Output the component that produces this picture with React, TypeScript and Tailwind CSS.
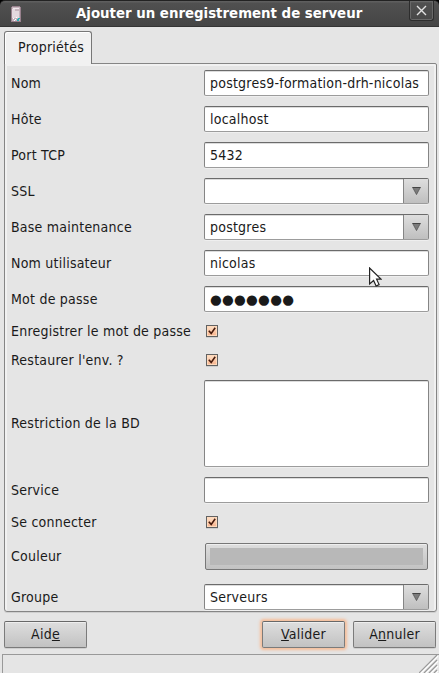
import type { ReactNode } from 'react';

function Row({ label, h, raised = false, children }: { label: string; h: string; raised?: boolean; children: ReactNode }) {
  return (
    <div className={`flex shrink-0 items-center ${h}`}>
      <span className={`w-[193px] shrink-0 whitespace-nowrap ${raised ? 'pb-[2px]' : ''}`}>{label}</span>
      {children}
    </div>
  );
}

const field =
  'rounded-[2px] border border-t-[#6b6b6b] border-l-[#858585] border-r-[#858585] border-b-[#9c9c9c] bg-white shadow-[0_1px_0_#efefef,inset_0_1px_0_#dcdcdc]';

function Field({ value = '', tall = false }: { value?: ReactNode; tall?: boolean }) {
  return (
    <div className={`${field} flex w-[225px] items-center whitespace-nowrap pl-[5px] ${tall ? 'h-[87px]' : 'h-[26px]'}`}>
      {value}
    </div>
  );
}

function Combo({ value = '' }: { value?: string }) {
  return (
    <div className={`${field} flex h-[26px] w-[225px] items-stretch`}>
      <div className="flex flex-1 items-center pl-[5px]">{value}</div>
      <div className="flex w-[25px] items-center justify-center border-l border-[#858585] bg-linear-to-b from-[#dedede] to-[#bfbfbf]">
        <svg width="9" height="8" viewBox="0 0 9 8">
          <path d="M0.7 0.5h7.6L4.5 7.6z" fill="#7b7b7b" stroke="#555" strokeWidth=".8" />
          <path d="M0.5 0.5h8" stroke="#444" />
        </svg>
      </div>
    </div>
  );
}

function Check() {
  return (
    <div className="ml-[2px] flex h-3 w-3 items-center justify-center border border-[#626262] bg-linear-to-b from-[#ffe2c8] to-[#f8b38d] shadow-[0_1px_0_#cfcfcf,inset_0_0_0_1px_#ffd9bb]">
      <svg width="10" height="10" viewBox="0 0 10 10" className="shrink-0">
        <path d="M1.8 4.8L4.2 7.4L8.2 1.8" fill="none" stroke="#451a0c" strokeWidth="1.6" />
      </svg>
    </div>
  );
}

const button =
  'flex h-[27px] w-[83px] items-center justify-center rounded-[2px] border border-[#7b7b7b] border-t-[#686868] bg-linear-to-b from-[#dedede] to-[#c2c2c2] pb-[2px]';

export default function App() {
  return (
    <div className="relative flex h-[673px] w-[439px] flex-col overflow-hidden bg-[#e5e5e5] font-['DejaVu_Sans_Condensed','DejaVu_Sans',sans-serif] text-[14px] leading-4 tracking-[0.23px] text-[#1a1a1a] [font-stretch:condensed]">
      <header className="flex h-[27px] shrink-0 bg-black">
        <div className="flex w-full items-start rounded-t-[5px] border-t border-b border-t-[#222] border-b-[#343434] bg-linear-to-b from-[#626262] via-[#505050] via-10% to-[#454545]">
          <svg width="11" height="17" viewBox="0 0 11 17" className="mt-[5px] ml-[11px] shrink-0" shapeRendering="crispEdges">
            <path d="M0 1h1V0h8v1h1v15H0z" fill="#98818d" />
            <path d="M1 1h8v14H1z" fill="#c6b4bd" />
            <path d="M1 3h3v9H1zM4 5h4v7H4z" fill="#e4d9df" />
            <path d="M2 2h6v1H2z" fill="#f0e6eb" />
            <path d="M2 12h1v1H2zm2 1h1v1H4zm-1 1h1v1H3zm2-3h1v1H5z" fill="#fff" />
            <path d="M7 12h2v1h-1v2H6v-2h1z" fill="#29afb4" />
          </svg>
          <h1 className="mt-[5px] ml-[54px] w-[288px] shrink-0 font-['DejaVu_Sans',sans-serif] whitespace-nowrap text-[13.35px] leading-4 font-bold tracking-normal text-white [font-stretch:normal]">
            Ajouter un enregistrement de serveur
          </h1>
          <div className="ml-[45px] flex h-[20px] w-[25px] shrink-0 items-center justify-center rounded-b-[3px] border border-t-0 border-[#2d2d2d] shadow-[inset_0_0_0_1px_#686868]">
            <svg width="11" height="11" viewBox="0 0 11 11">
              <path d="M1 1l9 9M10 1L1 10" stroke="#e2e2e2" strokeWidth="1.4" />
            </svg>
          </div>
        </div>
      </header>

      <main className="flex h-[585px] shrink-0 flex-col pt-1 pr-[2px] pl-1">
        <div className="z-10 -mb-px flex h-[33px] w-[88px] shrink-0 items-center justify-center rounded-t-[3px] border border-b-0 border-[#777] bg-[#f1f1f1] pb-[2px] pl-[6px] shadow-[inset_1px_1px_0_#fff]">
          Propriétés
        </div>
        <section className="flex h-[549px] w-[433px] shrink-0 flex-col rounded-b-[3px] rounded-tr-[2px] border border-[#858585] pt-px pl-[6px] shadow-[inset_2px_2px_0_#f1f1f1,inset_-2px_0_0_#f1f1f1,0_1px_0_#cfcfcf]">
          <Row label="Nom" h="h-9"><Field value="postgres9-formation-drh-nicolas" /></Row>
          <Row label="Hôte" h="h-9"><Field value="localhost" /></Row>
          <Row label="Port TCP" h="h-9"><Field value="5432" /></Row>
          <Row label="SSL" h="h-9"><Combo /></Row>
          <Row label="Base maintenance" h="h-9"><Combo value="postgres" /></Row>
          <Row label="Nom utilisateur" h="h-9"><Field value="nicolas" /></Row>
          <Row label="Mot de passe" h="h-9">
            <Field value={<span className="font-['DejaVu_Sans',sans-serif] text-[13.5px] tracking-[0.25px] [font-stretch:normal]">●●●●●●●</span>} />
          </Row>
          <Row label="Enregistrer le mot de passe" h="h-7"><Check /></Row>
          <Row label="Restaurer l'env. ?" h="h-[30px]"><Check /></Row>
          <Row label="Restriction de la BD" h="h-[97px]" raised><Field tall /></Row>
          <Row label="Service" h="h-9"><Field /></Row>
          <Row label="Se connecter" h="h-7"><Check /></Row>
          <Row label="Couleur" h="h-[41px]" raised>
            <div className="ml-px h-[27px] w-[223px] rounded-[2px] border border-[#777] bg-linear-to-b from-[#dedede] to-[#c2c2c2] p-1 shadow-[inset_0_1px_0_#eee]">
              <div className="h-[17px] bg-[#b8b8b8]" />
            </div>
          </Row>
          <Row label="Groupe" h="h-10"><Combo value="Serveurs" /></Row>
        </section>
      </main>

      <div className="flex h-[42px] shrink-0 items-start pt-[9px] pr-[3px] pl-1">
        <button className={`${button} shadow-[0_1px_0_#cfcfcf,inset_0_1px_0_#eee]`}><span>Aid<u>e</u></span></button>
        <button className={`${button} ml-auto shadow-[0_0_3px_2px_#f6bd98,inset_0_1px_0_#eee]`}><span><u>V</u>alider</span></button>
        <button className={`${button} ml-2 shadow-[0_1px_0_#cfcfcf,inset_0_1px_0_#eee]`}><span>A<u>n</u>nuler</span></button>
      </div>

      <footer className="ml-[2px] flex h-[19px] items-end justify-end border-t border-l border-[#999]">
        <svg width="20" height="18" viewBox="0 0 20 18">
          <path d="M1 19L19 1M6 19L19 6M11 19L19 11M16 19L19 16" stroke="#fff" strokeWidth="1.4" />
          <path d="M0 18L18 0M5 18L18 5M10 18L18 10M15 18L18 15" stroke="#999" strokeWidth="1.2" />
        </svg>
      </footer>

      <svg width="14" height="22" viewBox="0 0 14 22" className="absolute top-[267px] left-[368px]">
        <path d="M1.6 1v16l4-3.5 2.5 5.5 3-1.4L8.6 12.2h4.6z" fill="#fff" stroke="#222" strokeWidth="1.2" />
      </svg>
    </div>
  );
}
